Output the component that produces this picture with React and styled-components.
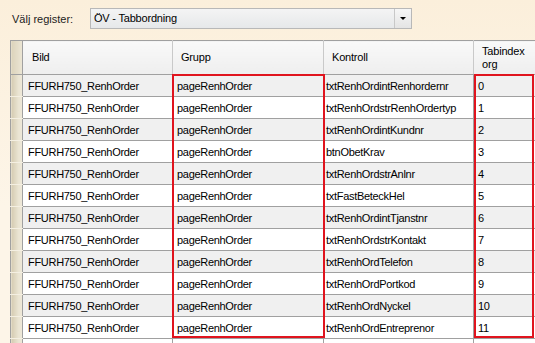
import React from 'react';
import styled, { createGlobalStyle } from 'styled-components';

const GlobalStyle = createGlobalStyle`
  body {
    margin: 0;
    background: #fcf2e1;
    font-family: 'Liberation Sans', Arial, sans-serif;
    font-size: 11px;
    color: #000;
  }
`;

const Page = styled.div`
  width: 535px;
  height: 343px;
  overflow: hidden;
  background: linear-gradient(#fbefdb, #fdf5e8 60%);
`;

const Toolbar = styled.div`
  display: flex;
  align-items: center;
  height: 21px;
  padding: 8px 0 0 12px;
`;

const Label = styled.span`
  width: 78px;
  color: #222;
`;

const Combo = styled.div`
  display: flex;
  align-items: stretch;
  width: 320px;
  height: 19px;
  border: 1px solid #b8b8b8;
  background: linear-gradient(#f4f4f4, #e6e8ea);
`;

const ComboText = styled.div`
  flex: 1;
  padding-left: 3px;
  line-height: 19px;
  letter-spacing: -0.2px;
`;

const DropButton = styled.div`
  width: 16px;
  border-left: 1px solid #c8c8c8;
  background: linear-gradient(#f6f6f6, #e4e4e4);
  display: flex;
  align-items: center;
  justify-content: center;

  &::after {
    content: '';
    border-left: 3px solid transparent;
    border-right: 3px solid transparent;
    border-top: 3px solid #000;
  }
`;

const GridWrap = styled.div`
  position: relative;
  margin: 11px 0 0 10px;
`;

const Table = styled.table`
  border-collapse: collapse;
  table-layout: fixed;
  width: 525px;
  background: #fff;
`;

const HeadCell = styled.th`
  height: 33px;
  padding: 0 0 0 ${p => p.$pad}px;
  text-align: left;
  vertical-align: middle;
  font-weight: normal;
  line-height: 13px;
  background: linear-gradient(#f9f9f9, #eeeeee);
  border: 1px solid #c9c9c9;
  border-top-color: #a0a0a0;
  border-bottom-color: #a0a0a0;
  letter-spacing: -0.2px;
`;

const Corner = styled.th`
  background: linear-gradient(90deg, #dcd3bb, #ece6d5);
  border: 1px solid #a0a0a0;
  padding: 0;
`;

const RowHead = styled.td`
  background: linear-gradient(90deg, #d5cbb1, #e9e3d1 60%, #efe9da);
  border: 1px solid #a0a0a0;
  border-bottom-color: #f4efe2;
  padding: 0;
`;

const Cell = styled.td`
  height: 21px;
  padding: 0 0 0 ${p => p.$pad}px;
  background: ${p => (p.$alt ? '#f0f0f0' : '#ffffff')};
  border: 1px solid #a0a0a0;
  white-space: nowrap;
  overflow: hidden;
  letter-spacing: -0.3px;
`;

const Mark = styled.div`
  position: absolute;
  top: 34px;
  height: 264px;
  border: 2px solid #e0141e;
  box-sizing: border-box;
  pointer-events: none;
`;

const controls = [
  'txtRenhOrdintRenhordernr',
  'txtRenhOrdstrRenhOrdertyp',
  'txtRenhOrdintKundnr',
  'btnObetKrav',
  'txtRenhOrdstrAnlnr',
  'txtFastBeteckHel',
  'txtRenhOrdintTjanstnr',
  'txtRenhOrdstrKontakt',
  'txtRenhOrdTelefon',
  'txtRenhOrdPortkod',
  'txtRenhOrdNyckel',
  'txtRenhOrdEntreprenor',
];

export default function App() {
  return (
    <Page>
      <GlobalStyle />
      <Toolbar>
        <Label>Välj register:</Label>
        <Combo>
          <ComboText>ÖV - Tabbordning</ComboText>
          <DropButton />
        </Combo>
      </Toolbar>
      <GridWrap>
        <Table>
          <colgroup>
            <col style={{ width: 12 }} />
            <col style={{ width: 150 }} />
            <col style={{ width: 151 }} />
            <col style={{ width: 150 }} />
            <col style={{ width: 62 }} />
          </colgroup>
          <thead>
            <tr>
              <Corner />
              <HeadCell $pad={9}>Bild</HeadCell>
              <HeadCell $pad={8}>Grupp</HeadCell>
              <HeadCell $pad={8}>Kontroll</HeadCell>
              <HeadCell $pad={8}>Tabindex<br />org</HeadCell>
            </tr>
          </thead>
          <tbody>
            {controls.map((c, i) => (
              <tr key={c}>
                <RowHead />
                <Cell $pad={5} $alt={i % 2 === 0}>FFURH750_RenhOrder</Cell>
                <Cell $pad={4} $alt={i % 2 === 0}>pageRenhOrder</Cell>
                <Cell $pad={2} $alt={i % 2 === 0}>{c}</Cell>
                <Cell $pad={4} $alt={i % 2 === 0}>{i}</Cell>
              </tr>
            ))}
            <tr>
              <RowHead />
              <Cell $pad={5} />
              <Cell $pad={4} />
              <Cell $pad={2} />
              <Cell $pad={4} />
            </tr>
          </tbody>
        </Table>
        <Mark style={{ left: 162, width: 153 }} />
        <Mark style={{ left: 464, width: 60 }} />
      </GridWrap>
    </Page>
  );
}
